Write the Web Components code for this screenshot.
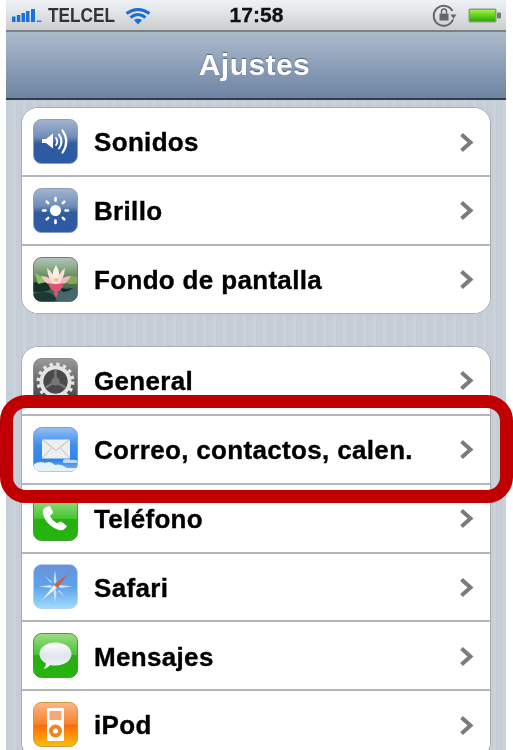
<!DOCTYPE html>
<html lang="es"><head><meta charset="utf-8"><title>Ajustes</title>
<style>
html,body{margin:0;padding:0;background:#fff;height:750px;overflow:hidden;font-family:"Liberation Sans",Arial,sans-serif}
</style></head><body>
<iphone-screen>
  <status-bar slot="top"></status-bar>
  <nav-bar slot="top">Ajustes</nav-bar>
  <settings-group>
    <settings-row label="Sonidos"><svg slot="icon" viewBox="0 0 45 45"><defs><linearGradient id="a" x1="0" y1="0" x2="0" y2="1"><stop offset="0" stop-color="#a4b5cd"/><stop offset=".4" stop-color="#6f8db9"/><stop offset=".55" stop-color="#2f5b9f"/><stop offset="1" stop-color="#2c5aa6"/></linearGradient></defs><rect x=".5" y=".5" width="44" height="44" rx="8" fill="url(#a)" stroke="#8ba0c0"/><path d="M9 20h4l7-5.500v15L13 24H9z" fill="#fff"/><g fill="none" stroke="#fff" stroke-linecap="round"><path d="M23 19q2.500 3.500 0 7" stroke-width="1.800"/><path d="M26 15.500q5 7 0 14" stroke-width="2"/><path d="M29.500 11.500q7.500 11 0 22" stroke-width="2.200"/></g></svg></settings-row>
    <settings-row label="Brillo"><svg slot="icon" viewBox="0 0 45 45"><defs><linearGradient id="a2" x1="0" y1="0" x2="0" y2="1"><stop offset="0" stop-color="#a4b5cd"/><stop offset=".4" stop-color="#6f8db9"/><stop offset=".55" stop-color="#2f5b9f"/><stop offset="1" stop-color="#2c5aa6"/></linearGradient></defs><rect x=".5" y=".5" width="44" height="44" rx="8" fill="url(#a2)" stroke="#8ba0c0"/><circle cx="22.500" cy="22.500" r="5.500" fill="#fff"/><g stroke="#fff" stroke-width="2.600" stroke-linecap="round"><path d="M22.500 10v2.500M22.500 32.500v2.500M10 22.500h2.500M32.500 22.500h2.500M13.700 13.700l1.500 1.500M29.800 29.800l1.500 1.500M13.700 31.300l1.500-1.500M29.800 15.200l1.500-1.500"/></g></svg></settings-row>
    <settings-row label="Fondo de pantalla"><svg slot="icon" viewBox="0 0 45 45"><defs><linearGradient id="f" x1="0" y1="0" x2="0" y2="1"><stop offset="0" stop-color="#b3c2c4"/><stop offset=".22" stop-color="#8eae8a"/><stop offset=".5" stop-color="#54804f"/><stop offset="1" stop-color="#2c4a48"/></linearGradient><clipPath id="fc"><rect x=".5" y=".5" width="44" height="44" rx="8"/></clipPath></defs><rect x=".5" y=".5" width="44" height="44" rx="8" fill="url(#f)" stroke="#777"/><g clip-path="url(#fc)"><ellipse cx="6" cy="30" rx="13" ry="5" fill="#16302a"/><ellipse cx="39" cy="23" rx="9" ry="4" fill="#82a957"/><ellipse cx="34" cy="38" rx="15" ry="7" fill="#45696b"/><ellipse cx="10" cy="42" rx="13" ry="7" fill="#1d3937"/><path d="M2 16l15 8-12 3z" fill="#8cc06d"/><path d="M25 30q6 3 15 1-5 4-10 4z" fill="#122b25"/><path d="M8 19q10 0 14 9-9 1-14-9z" fill="#f6c3c6"/><path d="M38 19q-10 0-14 9 9 1 14-9z" fill="#f2b6bf"/><path d="M23 8q6 9 1 21h-3q-4-12 2-21z" fill="#fdf0ec"/><path d="M14 11q7 5 9 17-8-3-9-17z" fill="#fbe2df"/><path d="M32 11q-7 5-9 17 8-3 9-17z" fill="#fbdcd9"/><path d="M15 26q8 2 16 0-2 7-6 8l-1 6h-2l-1-6q-4-1-6-8z" fill="#dc5474"/><circle cx="23" cy="23" r="2.200" fill="#edc97c"/></g></svg></settings-row>
  </settings-group>
  <settings-group>
    <settings-row label="General"><svg slot="icon" viewBox="0 0 45 45"><defs><linearGradient id="g" x1="0" y1="0" x2="0" y2="1"><stop offset="0" stop-color="#9a9a9a"/><stop offset=".5" stop-color="#6a6a6a"/><stop offset="1" stop-color="#3e3e3e"/></linearGradient></defs><rect x=".5" y=".5" width="44" height="44" rx="8" fill="url(#g)" stroke="#8c8c8c"/><circle cx="22.500" cy="23.500" r="14" fill="none" stroke="#e4e4e4" stroke-width="4"/><circle cx="22.500" cy="23.500" r="17" fill="none" stroke="#e4e4e4" stroke-width="4" stroke-dasharray="3.200 3.500"/><circle cx="22.500" cy="23.500" r="12" fill="#4a4a4a"/><circle cx="22.500" cy="23.500" r="4" fill="#777"/><g stroke="#777" stroke-width="2.500"><path d="M22.500 12v8M12.500 29.500l7-4M32.500 29.500l-7-4"/></g></svg></settings-row>
    <settings-row label="Correo, contactos, calen."><svg slot="icon" viewBox="0 0 45 45"><defs><linearGradient id="m" x1="0" y1="0" x2="0" y2="1"><stop offset="0" stop-color="#93bff3"/><stop offset=".4" stop-color="#3f8dee"/><stop offset=".75" stop-color="#2f84e8"/><stop offset="1" stop-color="#86bff0"/></linearGradient><clipPath id="mc"><rect x=".5" y=".5" width="44" height="44" rx="8"/></clipPath></defs><rect x=".5" y=".5" width="44" height="44" rx="8" fill="url(#m)" stroke="#74a3dc"/><g clip-path="url(#mc)"><path d="M0 38q6-5 12-2 5-3 10 2 6-2 12 3h11v5H0z" fill="#e6f2fb"/><path d="M30 33q4-2 8 0 3-1 7 1v2H30z" fill="#b9dcf6"/></g><rect x="9" y="12.500" width="28" height="19" rx="1" fill="#eeeeee"/><path d="M9 12.500l14 11 14-11M9 31.500l10-11M37 31.500l-10-11" fill="none" stroke="#bdbdbd" stroke-width="1"/></svg></settings-row>
    <settings-row label="Teléfono"><svg slot="icon" viewBox="0 0 45 45"><defs><linearGradient id="p" x1="0" y1="0" x2="0" y2="1"><stop offset="0" stop-color="#a6e08c"/><stop offset=".5" stop-color="#45c431"/><stop offset=".52" stop-color="#27b011"/><stop offset="1" stop-color="#25b50e"/></linearGradient></defs><rect x=".5" y=".5" width="44" height="44" rx="8" fill="url(#p)" stroke="#3f9f2c"/><path transform="translate(2.500 7) scale(.85 .75)" d="M10.500 6.500l5-2.500q1.500 0 2 1l3 7q.300 1.500-1 2.500l-2.500 2q2 6 8.500 10.500l3-2q1.300-.700 2.500.200l5.500 5q.800 1-.200 2l-3.500 3.500q-3 2-9-1.500C15 30 9 20 8.500 12q0-3.500 2-5.500z" fill="#fff"/></svg></settings-row>
    <settings-row label="Safari"><svg slot="icon" viewBox="0 0 45 45"><defs><linearGradient id="s" x1="0" y1="0" x2="0" y2="1"><stop offset="0" stop-color="#6a90dc"/><stop offset=".5" stop-color="#5ba2ec"/><stop offset="1" stop-color="#a0dcfb"/></linearGradient></defs><rect x=".5" y=".5" width="44" height="44" rx="8" fill="url(#s)" stroke="#b3d0f2"/><g fill="#cfe2f8"><path d="M22 6l1.500 11-1.500 3-1.500-3zM22 39l1.500-11-1.500-3-1.500 3zM6 22.500l11-1.500 3 1.500-3 1.500zM39 22.500l-11-1.500-3 1.500 3 1.500z"/><path d="M12 12l7 6-1 1zM32 33l-7-6 1-1z"/></g><path d="M36 9L21 21l3 3z" fill="#e0592e"/><path d="M9 36l12-15 3 3z" fill="#eef0f2"/></svg></settings-row>
    <settings-row label="Mensajes"><svg slot="icon" viewBox="0 0 45 45"><defs><linearGradient id="k" x1="0" y1="0" x2="0" y2="1"><stop offset="0" stop-color="#9fdc84"/><stop offset=".48" stop-color="#45c431"/><stop offset=".5" stop-color="#27ae12"/><stop offset="1" stop-color="#25b50e"/></linearGradient><linearGradient id="kb" x1="0" y1="0" x2="0" y2="1"><stop offset="0" stop-color="#fff"/><stop offset=".5" stop-color="#dfe6ee"/><stop offset="1" stop-color="#f3f6f8"/></linearGradient></defs><rect x=".5" y=".5" width="44" height="44" rx="8" fill="url(#k)" stroke="#3f9f2c"/><path d="M22.500 9.500c9.500 0 16 5 16 11.500s-6.500 11.500-16 11.500q-3 0-5-.500-3 3-7 4 2.500-2.500 2.500-5.500C9 28 6.500 25 6.500 21c0-6.500 6.500-11.500 16-11.500z" fill="url(#kb)"/></svg></settings-row>
    <settings-row label="iPod"><svg slot="icon" viewBox="0 0 45 45"><defs><linearGradient id="i" x1="0" y1="0" x2="0" y2="1"><stop offset="0" stop-color="#fbb78a"/><stop offset=".48" stop-color="#f6832f"/><stop offset=".52" stop-color="#f66b0e"/><stop offset="1" stop-color="#fdbe07"/></linearGradient></defs><rect x=".5" y=".5" width="44" height="44" rx="8" fill="url(#i)" stroke="#c79b3f"/><rect x="14" y="6" width="17" height="33" rx="1.500" fill="#fff"/><rect x="16.500" y="9" width="12" height="9" fill="#f8a877"/><circle cx="22.500" cy="29" r="6.500" fill="#f6831f"/><circle cx="22.500" cy="29" r="2.500" fill="#fff"/></svg></settings-row>
  </settings-group>
</iphone-screen>
<highlight-box></highlight-box>
<script>
function def(name, css, html){
  customElements.define(name, class extends HTMLElement{
    constructor(){super();this.attachShadow({mode:'open'}).innerHTML='<style>'+css+'</style>'+html;}
    connectedCallback(){
      var l=this.getAttribute('label'),e=this.shadowRoot.querySelector('.label');
      if(l&&e)e.textContent=l;
    }
  });
}
def('iphone-screen',`
  :host{display:flex;flex-direction:column;width:500px;height:750px;margin-left:6px;overflow:hidden;
    background:repeating-linear-gradient(90deg,#c5cdd6 0 7px,#cbd2da 7px 10px);filter:blur(.6px)}
  .top{display:flex;flex-direction:column;flex:none}
  .list{display:flex;flex-direction:column;gap:32.4px;padding:7px 15px 0;flex:none}
`,'<div class="top"><slot name="top"></slot></div><div class="list"><slot></slot></div>');
def('status-bar',`
  :host{display:flex;align-items:center;height:30px;flex:none;
    background:linear-gradient(#eff2f4,#e6e9ea 30%,#cbcece);border-bottom:2px solid #7b8087;
    color:#333;font:bold 20px "Liberation Sans",Arial,sans-serif}
  .left{display:flex;align-items:center;flex:1 1 0;padding-left:6px}
  .name{margin-left:6px;transform:scaleX(.86);transform-origin:left center;width:67px;white-space:nowrap}
  .wifi{margin-left:10px;margin-top:2px}
  .time{flex:none;color:#111;font-size:21px;letter-spacing:.1px;-webkit-text-stroke:.3px #111}
  .right{display:flex;flex:1 1 0;align-items:center;justify-content:flex-end;padding-right:5px;gap:11px}
  svg{display:block}
`,`<div class="left">
  <svg width="30" height="16" viewBox="0 0 30 16"><g fill="#1f6fd8"><rect x="0" y="9.500" width="3.500" height="5.500"/><rect x="4.800" y="8" width="3.500" height="7"/><rect x="9.500" y="6" width="3.500" height="9"/><rect x="14" y="4" width="3.500" height="11"/><rect x="19" y="2" width="4" height="13"/></g><rect x="24.500" y="13.500" width="5" height="1.500" fill="#3f7fcf"/></svg>
  <span class="name">TELCEL</span>
  <svg class="wifi" width="26" height="18" viewBox="0 0 26 18"><g fill="none" stroke="#1c6bd6" stroke-width="3"><path d="M1.500 6.500Q13-1.500 24.500 6.500"/><path d="M5.500 10.500Q13 4.500 20.500 10.500"/></g><path d="M9 13q4-2.500 8 0l-4 4.500z" fill="#1c6bd6"/></svg>
</div>
<span class="time">17:58</span>
<div class="right">
  <svg width="25" height="24" viewBox="0 0 25 24"><path d="M21 16.500A10 10 0 1 1 20.500 8" fill="none" stroke="#666" stroke-width="2"/><path d="M18.500 11.500h6l-3 4.500z" fill="#666"/><rect x="7.500" y="10.500" width="9" height="7" fill="#666"/><path d="M9.500 10.500v-2a2.500 2.500 0 0 1 5 0v2" fill="none" stroke="#666" stroke-width="1.500"/></svg>
  <svg width="33" height="15" viewBox="0 0 33 15"><defs><linearGradient id="b" x1="0" y1="0" x2="0" y2="1"><stop offset="0" stop-color="#a5f04a"/><stop offset=".5" stop-color="#5ed21c"/><stop offset="1" stop-color="#3aa20d"/></linearGradient></defs><rect x=".5" y=".5" width="28" height="14" rx="1.500" fill="#8e938c"/><rect x="2" y="2" width="25" height="11" fill="url(#b)"/><rect x="29" y="4.500" width="4" height="6" rx="1" fill="#777"/></svg>
</div>`);
def('nav-bar',`
  :host{display:flex;align-items:center;justify-content:center;height:66px;flex:none;padding-right:3px;
    background:linear-gradient(#adbacb,#8d9fb8 50%,#6d84a2);border-bottom:2px solid #2f3c51;
    color:#fff;font:bold 30px "Liberation Sans",Arial,sans-serif;letter-spacing:.45px;text-shadow:0 -1px 1px rgba(40,55,80,.6)}
`,'<slot></slot>');
def('settings-group',`
  :host{display:block;background:#fff;border:1px solid #a9adb3;border-radius:17px;overflow:hidden;flex:none}
`,'<slot></slot>');
def('settings-row',`
  :host{display:flex;align-items:center;height:68.8px;box-sizing:border-box;padding-left:11px;padding-right:16px;border-top:2px solid #b4b7ba;background:#fff;
    color:#000;font:bold 26px "Liberation Sans",Arial,sans-serif;letter-spacing:.33px;-webkit-text-stroke:.35px #000}
  :host(:first-child){border-top:none;height:67px}
  ::slotted(svg){width:45px;height:45px;flex:none;display:block}
  .label{margin-left:16px;flex:1;white-space:nowrap;padding-top:2.5px}
  .chev{flex:none;display:block;margin-top:1px}
`,`<slot name="icon"></slot><span class="label"></span>
<svg class="chev" width="15" height="21" viewBox="0 0 15 21"><path d="M2.500 2.500L11.500 10.500l-9 8" fill="none" stroke="#7b7b7b" stroke-width="4"/></svg>`);
def('highlight-box',`
  :host{display:block;position:absolute;left:0;top:395px;width:513px;height:108px;box-sizing:border-box;border:13px solid #c00000;border-radius:26px;pointer-events:none}
`,'');
</script>
</body></html>
